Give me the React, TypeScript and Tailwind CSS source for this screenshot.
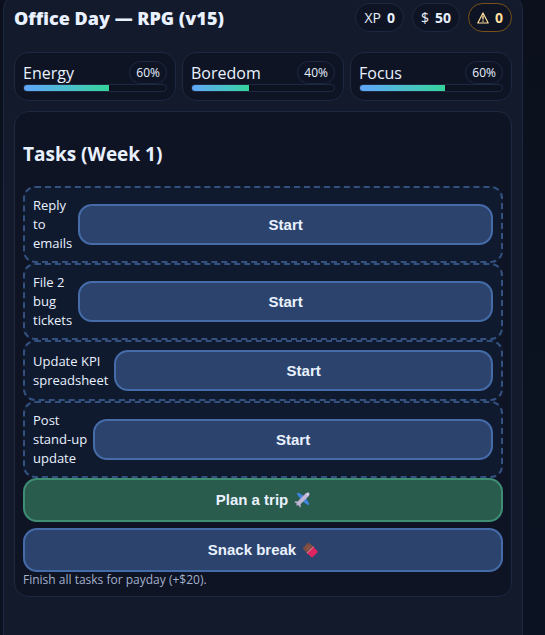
import type { ReactNode } from "react";
import clsx from "clsx";

const stats = [
  { name: "Energy", value: 60 },
  { name: "Boredom", value: 40 },
  { name: "Focus", value: 60 },
];

const tasks = ["Reply to emails", "File 2 bug tickets", "Update KPI spreadsheet", "Post stand-up update"];

function WarningIcon() {
  return (
    <svg viewBox="0 0 12 12" className="w-3 h-3" fill="none" aria-hidden="true">
      <path d="M6 1 L11.2 11 H0.8 Z" stroke="currentColor" strokeWidth="1.2" strokeLinejoin="round" />
      <path d="M6 3.6 V7.6 M6 8.4 V9.8" stroke="currentColor" strokeWidth="1.4" />
    </svg>
  );
}

function PlaneIcon() {
  return (
    <svg viewBox="0 0 16 16" className="w-4 h-4" aria-hidden="true">
      <path d="M11 4.6 L4.6 0.8 L2.6 1.4 L7 8 Z" fill="#3f83dc" />
      <path d="M11.4 5 L15.2 11.4 L14.4 13.4 L8 9 Z" fill="#3f83dc" />
      <path d="M4.6 9.4 L1.2 9.2 L0.4 10.2 L3.4 11.8 Z" fill="#b7acd0" />
      <path d="M6.6 11.4 L6.8 14.8 L5.8 15.6 L4.2 12.6 Z" fill="#b7acd0" />
      <path d="M15.2 0.8 C14.2 0 12.6 0.6 11.6 1.6 L4.4 8.8 C3.2 10 2.6 11.4 2.4 13.6 C4.6 13.4 6 12.8 7.2 11.6 L14.4 4.4 C15.4 3.4 16 1.8 15.2 0.8 Z" fill="#c0b5d3" />
      <path d="M12.2 2 L14 3.8 L14.8 2.8 L13.2 1.2 Z" fill="#e8e4f2" />
    </svg>
  );
}

function ChocolateIcon() {
  return (
    <svg viewBox="0 0 16 16" className="w-4 h-4" aria-hidden="true">
      <path d="M6.4 0.6 L12 5 L5.4 11.4 L0.6 6.2 Z" fill="#7d4b3f" />
      <path d="M3.4 3.6 L8.4 8.4 M9.2 2.8 L3 8.8" stroke="#98614f" strokeWidth="0.6" />
      <path d="M11.6 4.8 L15.8 9.6 Q15.8 10.4 15 11 L10.8 15 Q10 15.6 9.4 15.2 L5 11.2 Z" fill="#dc2460" />
      <path d="M11.6 4.8 L5 11.2" stroke="#f0a9c0" strokeWidth="0.8" />
    </svg>
  );
}

function Chip({ children, warn }: { children: ReactNode; warn?: boolean }) {
  return (
    <div
      className={clsx(
        "flex items-center gap-[6px] h-[29px] px-2 rounded-full border bg-[#0e1424] text-sm",
        warn ? "border-[#7a5218] text-[#ffdf9e]" : "border-[#1d2941]"
      )}
    >
      {children}
    </div>
  );
}

function ActionButton({ children, kind = "task" }: { children: ReactNode; kind?: "task" | "trip" | "snack" }) {
  return (
    <button
      type="button"
      className={clsx(
        "w-full min-w-0 flex items-center justify-center gap-[6px] rounded-[14px] border-2 py-[10px] text-[15px] font-bold font-['Liberation_Sans',Arial,sans-serif]",
        kind === "trip" ? "bg-[#2a5c4e] border-[#3f8e73]" : "bg-[#2c446d] border-[#456ba9]",
        kind === "task" ? "leading-[17px]" : "leading-[20px]"
      )}
    >
      {children}
    </button>
  );
}

export default function App() {
  return (
    <div className="h-screen overflow-hidden bg-linear-to-b from-[#0b101c] to-[#0b1322] text-[#e9f1ff] font-['Open_Sans','Noto_Sans',sans-serif] pl-[3px] pr-[22px]">
      <main className="-mt-2 min-h-[660px] rounded-[18px] border border-[#1d2941] bg-[#121a2b] px-[10px] pt-[10px]">
        {/* Top bar */}
        <header className="flex items-center justify-between">
          <h1 className="text-[18px] leading-6 font-extrabold">Office Day — RPG (v15)</h1>
          <div className="flex gap-2">
            <Chip>
              XP <b>0</b>
            </Chip>
            <Chip>
              $ <b>50</b>
            </Chip>
            <Chip warn>
              <WarningIcon /> <b>0</b>
            </Chip>
          </div>
        </header>

        {/* Stats */}
        <section className="mt-5 grid grid-cols-3 gap-[6px]">
          {stats.map((s) => (
            <div key={s.name} className="rounded-[14px] border border-[#1d2941] bg-[#0e1424] p-2">
              <div className="flex items-center justify-between h-[23px]">
                <span className="text-base">{s.name}</span>
                <span className="h-[23px] px-[6px] rounded-full border border-[#1d2941] text-xs leading-[21px]">
                  {s.value}%
                </span>
              </div>
              <div className="h-2 overflow-hidden rounded-full border border-[#1d2941] bg-[#0c1220]">
                <div
                  className="h-full bg-linear-to-r from-[#60a5fa] to-[#34d399]"
                  style={{ width: `${s.value}%` }}
                />
              </div>
            </div>
          ))}
        </section>

        {/* Tasks */}
        <section className="mt-[10px] rounded-[14px] border border-[#1d2941] bg-[#0e1424] p-2">
          <h2 className="pt-[21px] pb-[19px] text-[19px] leading-[26px] font-bold">Tasks (Week 1)</h2>
          <ul>
            {tasks.map((task) => (
              <li
                key={task}
                className="flex items-center gap-[6px] rounded-[12px] border-2 border-dashed border-[#33507f] bg-[#0f1a2e] p-2"
              >
                <span className="w-min shrink-0 text-[13px] leading-[19px]">
                  {task.split(" ").map((word) => (
                    <span key={word}>
                      <span className="whitespace-nowrap">{word}</span>{" "}
                    </span>
                  ))}
                </span>
                <ActionButton>Start</ActionButton>
              </li>
            ))}
          </ul>
          <div className="flex flex-col gap-[6px]">
            <ActionButton kind="trip">
              Plan a trip <PlaneIcon />
            </ActionButton>
            <ActionButton kind="snack">
              Snack break <ChocolateIcon />
            </ActionButton>
          </div>
          <p className="text-xs leading-4 text-[#a3b0cc]">Finish all tasks for payday (+$20).</p>
        </section>
      </main>
    </div>
  );
}
